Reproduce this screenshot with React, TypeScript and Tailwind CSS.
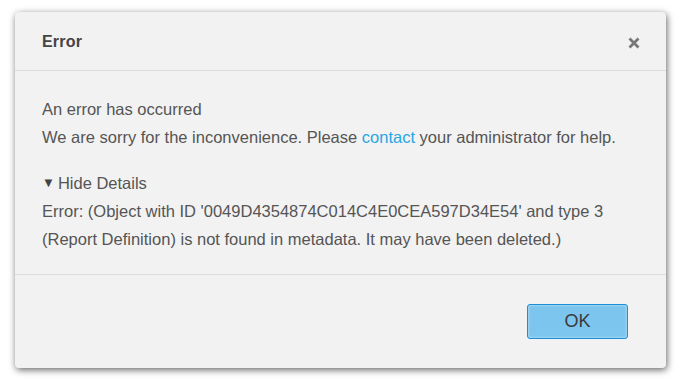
import React from 'react';

const App = () => {
  return (
    <div className="w-[681px] h-[381px] bg-white pt-[12px] pl-[15px] font-['Liberation_Sans',Arial,sans-serif]">
      <div className="w-[651px] h-[356px] bg-[#f2f2f2] rounded-[4px] shadow-[1px_2px_7px_rgba(0,0,0,0.6)] flex flex-col">
        <div className="h-[59px] px-[27px] pt-[2px] flex items-center justify-between border-b border-[#dcdcdc]">
          <h1 className="text-[16px] font-bold text-[#444] tracking-[0.2px]">Error</h1>
          <button className="mr-[-1px] mt-[1px]">
            <svg width="12" height="12" viewBox="0 0 12 12">
              <path d="M1.5 1.5 L10.5 10.5 M10.5 1.5 L1.5 10.5" stroke="#777" strokeWidth="2.8" strokeLinecap="butt" />
            </svg>
          </button>
        </div>

        <div className="flex-1 px-[27px] pt-[24px] text-[16.5px] leading-[28px] text-[#555]">
          <p>An error has occurred</p>
          <p>
            We are sorry for the inconvenience. Please{' '}
            <a className="text-[#29a6e3]">contact</a> your administrator for help.
          </p>
          <p className="mt-[18px] flex items-center">
            <span className="text-[13px] mr-[3px] text-[#444]">▼</span>Hide Details
          </p>
          <p className="pr-[20px]">
            Error: (Object with ID '0049D4354874C014C4E0CEA597D34E54' and type 3 (Report Definition) is not found in metadata. It may have been deleted.)
          </p>
        </div>

        <div className="h-[94px] border-t border-[#dcdcdc] flex justify-end items-start pt-[29px] pr-[38px]">
          <button className="w-[101px] h-[35px] rounded-[3px] border border-[#1e8fd6] bg-[#7cc5ee] text-[18px] text-[#3a3a3a] shadow-[inset_0_0_3px_rgba(255,255,255,0.6)]">
            OK
          </button>
        </div>
      </div>
    </div>
  );
};

export default App;
